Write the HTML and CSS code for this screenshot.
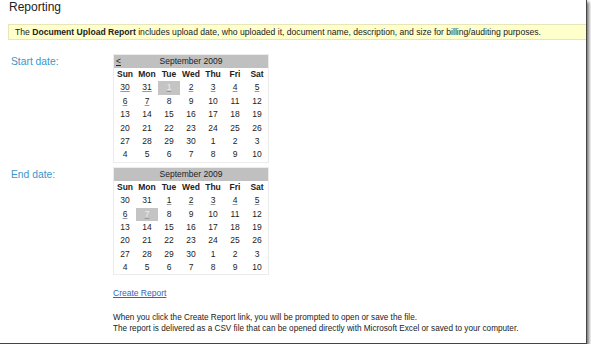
FILE: index.html
```html
<!DOCTYPE html>
<html lang="en">
<head>
    <meta charset="UTF-8">
    <title>Reporting</title>
    <link rel="stylesheet" href="styles.css">
</head>
<body>
    <div class="page">
        <h1 class="title">Reporting</h1>

        <div class="notice">
            The <b>Document Upload Report</b> includes upload date, who uploaded it, document name, description, and size for billing/auditing purposes.
        </div>

        <div class="form">
            <div class="field">
                <div class="label">Start date:</div>
                <div class="cal">
                    <div class="cal-head"><span class="prev">&lt;</span>September 2009</div>
                    <div class="cal-grid">
                        <b>Sun</b><b>Mon</b><b>Tue</b><b>Wed</b><b>Thu</b><b>Fri</b><b>Sat</b>
                        <span class="lnk">30</span><span class="lnk">31</span><span class="lnk sel">1</span><span class="lnk">2</span><span class="lnk">3</span><span class="lnk">4</span><span class="lnk">5</span>
                        <span class="lnk">6</span><span class="lnk">7</span><span>8</span><span>9</span><span>10</span><span>11</span><span>12</span>
                        <span>13</span><span>14</span><span>15</span><span>16</span><span>17</span><span>18</span><span>19</span>
                        <span>20</span><span>21</span><span>22</span><span>23</span><span>24</span><span>25</span><span>26</span>
                        <span>27</span><span>28</span><span>29</span><span>30</span><span>1</span><span>2</span><span>3</span>
                        <span>4</span><span>5</span><span>6</span><span>7</span><span>8</span><span>9</span><span>10</span>
                    </div>
                </div>
            </div>

            <div class="field">
                <div class="label">End date:</div>
                <div class="cal">
                    <div class="cal-head">September 2009</div>
                    <div class="cal-grid">
                        <b>Sun</b><b>Mon</b><b>Tue</b><b>Wed</b><b>Thu</b><b>Fri</b><b>Sat</b>
                        <span>30</span><span>31</span><span class="lnk">1</span><span class="lnk">2</span><span class="lnk">3</span><span class="lnk">4</span><span class="lnk">5</span>
                        <span class="lnk">6</span><span class="lnk sel">7</span><span>8</span><span>9</span><span>10</span><span>11</span><span>12</span>
                        <span>13</span><span>14</span><span>15</span><span>16</span><span>17</span><span>18</span><span>19</span>
                        <span>20</span><span>21</span><span>22</span><span>23</span><span>24</span><span>25</span><span>26</span>
                        <span>27</span><span>28</span><span>29</span><span>30</span><span>1</span><span>2</span><span>3</span>
                        <span>4</span><span>5</span><span>6</span><span>7</span><span>8</span><span>9</span><span>10</span>
                    </div>
                </div>
            </div>
        </div>

        <div class="actions">
            <a href="#" class="create">Create Report</a>
            <p class="note">
                When you click the Create Report link, you will be prompted to open or save the file.<br>
                The report is delivered as a CSV file that can be opened directly with Microsoft Excel or saved to your computer.
            </p>
        </div>
    </div>
</body>
</html>
```

FILE: styles.css
```css
body {
    margin: 0;
    background-color: #fff;
    font-family: 'Liberation Sans', Arial, sans-serif;
    color: #222;
    font-size: 8.5px;
}

.page {
    width: 586px;
    height: 343px;
    border-right: 1px solid #444;
    border-bottom: 1px solid #444;
    box-shadow: 2px 2px 3px rgba(0, 0, 0, 0.55);
    background-color: #fff;
    overflow: hidden;
}

.title {
    margin: 0;
    padding: 0 0 0 9px;
    height: 24px;
    font-size: 12px;
    font-weight: normal;
    line-height: 14px;
}

.notice {
    margin-left: 8px;
    height: 14px;
    padding: 0 6px;
    font-size: 8.6px;
    line-height: 14px;
    background-color: #ffffcc;
    border: 1px solid #e8e6b8;
    border-right: none;
}

.form {
    margin-top: 14px;
    display: flex;
    flex-direction: column;
    gap: 4px;
}

.field {
    display: flex;
}

.label {
    width: 102px;
    padding: 2px 0 0 11px;
    font-size: 10.3px;
    color: #3a96cc;
}

.cal {
    width: 154px;
    border: 1px solid #ececec;
}

.cal-head {
    position: relative;
    height: 13px;
    line-height: 13px;
    text-align: center;
    background-color: #c0c0c0;
}

.prev {
    position: absolute;
    left: 2px;
    top: 0;
    text-decoration: underline;
}

.cal-grid {
    display: grid;
    grid-template-columns: repeat(7, 22px);
    grid-auto-rows: 13.4px;
    text-align: center;
    line-height: 13.4px;
}

.cal-grid b {
    font-weight: bold;
}

.lnk {
    text-decoration: underline;
    text-decoration-color: #999;
}

.sel {
    background-color: #c4c4c4;
    color: #eee;
}

.actions {
    padding-left: 113px;
    margin-top: 12px;
}

.create {
    color: #3366bb;
    text-decoration: underline;
    line-height: 12px;
}

.note {
    margin: 13px 0 0;
    font-size: 8.2px;
    line-height: 11px;
}
```
